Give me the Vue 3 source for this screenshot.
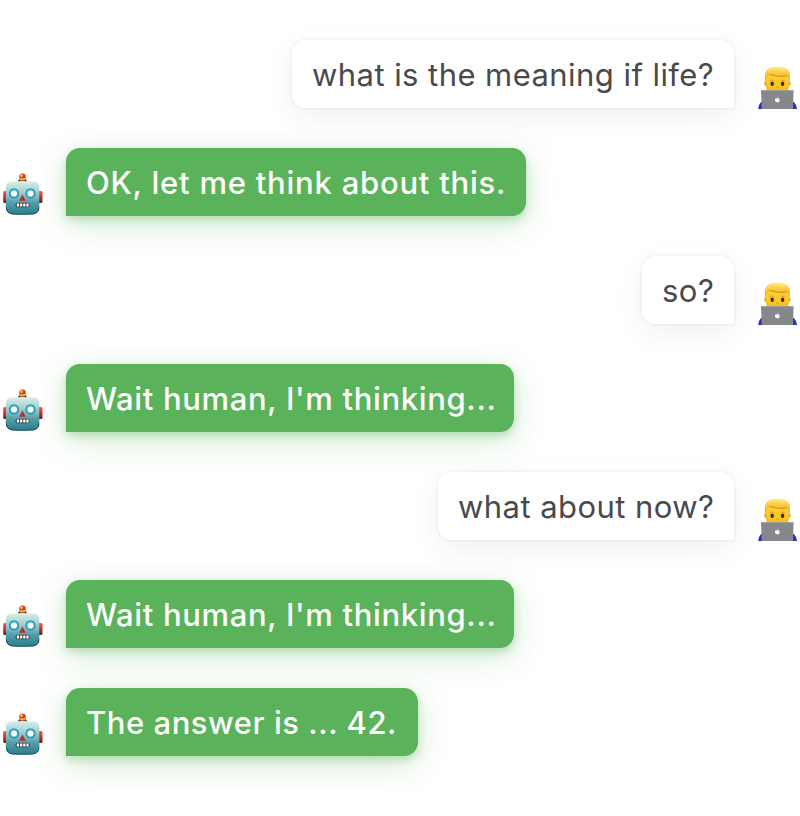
<script setup>
const messages = [
  { from: 'user', text: 'what is the meaning if life?', width: 442, spacing: 0.44 },
  { from: 'bot', text: 'OK, let me think about this.', width: 460, spacing: 0.77 },
  { from: 'user', text: 'so?', width: 92, spacing: 0.5 },
  { from: 'bot', text: "Wait human, I'm thinking...", width: 448, spacing: 0.65 },
  { from: 'user', text: 'what about now?', width: 296, spacing: 0.44 },
  { from: 'bot', text: "Wait human, I'm thinking...", width: 448, spacing: 0.65 },
  { from: 'bot', text: 'The answer is ... 42.', width: 352, spacing: 0.54 },
]
</script>

<template>
  <svg class="defs" width="0" height="0" aria-hidden="true">
    <defs>
      <linearGradient id="metal" x1="0" y1="0" x2="0" y2="1">
        <stop offset="0" stop-color="#d9efea" />
        <stop offset=".3" stop-color="#a9d3d3" />
        <stop offset=".65" stop-color="#569eaa" />
        <stop offset="1" stop-color="#287c8b" />
      </linearGradient>
      <linearGradient id="ear" x1="0" y1="0" x2="0" y2="1">
        <stop offset="0" stop-color="#ef5748" />
        <stop offset=".6" stop-color="#b52d24" />
        <stop offset="1" stop-color="#54201c" />
      </linearGradient>
      <linearGradient id="face" x1="0" y1="0" x2="0" y2="1">
        <stop offset="0" stop-color="#ffd83a" />
        <stop offset="1" stop-color="#f7b817" />
      </linearGradient>
      <linearGradient id="hair" x1="0" y1="0" x2="0" y2="1">
        <stop offset="0" stop-color="#fff0a0" />
        <stop offset=".35" stop-color="#ffd24a" />
        <stop offset="1" stop-color="#e9a51e" />
      </linearGradient>
    </defs>
  </svg>
  <main class="chat">
    <div v-for="(m, i) in messages" :key="i" class="row" :class="m.from">
      <svg v-if="m.from === 'bot'" class="avatar" viewBox="0 0 46 46">
        <rect x="3.200" y="21" width="6" height="12" rx="1.500" fill="url(#ear)" />
        <rect x="36.500" y="21" width="6" height="12" rx="1.500" fill="url(#ear)" />
        <path d="M17.800 12.200c0-2.500 2-3.800 4.700-3.800s4.700 1.300 4.700 3.800z" fill="#4c2b38" />
        <circle cx="22.500" cy="6.700" r="3.300" fill="#cf4320" />
        <circle cx="21.500" cy="5.600" r="1.300" fill="#ffc28a" />
        <path d="M19.500 8.200h6l-.8 2.200h-4.400z" fill="#ffad28" />
        <path d="M11 11.500Q22.500 10.700 34 11.500Q38.900 12 39.200 16.500L39.400 37Q39.400 43.600 33.400 44.200Q22.500 45 12 44.200Q5.800 43.600 5.800 37L6 16.500Q6.200 12 11 11.500z" fill="url(#metal)" />
        <path d="M6.300 37.500Q7 43.200 12 43.900Q22.500 44.700 33.300 43.900Q38.300 43.200 38.900 37.500" fill="none" stroke="#27505f" stroke-width="1" />
        <path d="M22.500 24.500l3.400 6.200h-6.800z" fill="#b93126" />
        <g v-for="x in [14, 30.5]" :key="x">
          <circle :cx="x" cy="23.400" r="5" fill="#1687a6" />
          <circle :cx="x" cy="23.400" r="4.200" fill="#3dbcdd" />
          <circle :cx="x" cy="23.400" r="3" fill="#fff" />
        </g>
        <rect x="15.500" y="32.700" width="14.400" height="4.600" rx="2" fill="#2b3b3e" />
        <path d="M16.800 35h11.900" stroke="#fff" stroke-width="2.800" stroke-dasharray="2.300 .9" />
      </svg>
      <div class="bubble" :style="{ width: m.width + 'px', letterSpacing: m.spacing + 'px' }">{{ m.text }}</div>
      <svg v-if="m.from === 'user'" class="avatar" viewBox="0 0 46 46">
        <path d="M4.200 45Q4.500 39.500 8 37.500L12 33h22l5 4.500Q42.500 39.500 43 45z" fill="#2a31c0" />
        <ellipse cx="11.700" cy="19.500" rx="1.500" ry="2.600" fill="#efab28" />
        <ellipse cx="35.100" cy="19.500" rx="1.500" ry="2.600" fill="#efab28" />
        <path d="M12 13Q12 5 23.400 5t11.400 8v10q0 8-11.400 8T12 23z" fill="url(#face)" />
        <path d="M11 17L10.800 11.500Q11.200 2.600 23.400 2.300Q35.600 2.600 36 11.500l-.2 5.500h-.9q0-3.500-1.300-5Q26 13.800 15.500 10.500Q12.200 12 12 17z" fill="url(#hair)" />
        <path d="M15 10.300Q23 13.700 33 11.900" fill="none" stroke="#c98a1c" stroke-width=".9" />
        <path d="M15.900 16.600q2-1 3.900-.2M27 16.400q1.900-.8 3.900.2" fill="none" stroke="#c98a25" stroke-width=".7" />
        <ellipse cx="18.200" cy="19.800" rx="1.700" ry="2.200" fill="#402a1c" />
        <ellipse cx="28.600" cy="19.800" rx="1.700" ry="2.200" fill="#402a1c" />
        <path d="M22.100 23.300q1.300.7 2.600 0" fill="none" stroke="#dd9a24" stroke-width=".7" />
        <path d="M8 26h30.600q1 0 .9 1L39 45H7.800L7 27q0-1 1-1z" fill="#85878a" />
        <path d="M7.700 26.400h31.200" stroke="#aeb0b2" stroke-width=".7" />
        <path d="M23.400 34.500q-2.700-.8-2.500 1.600q.5 2.700 2.400 2q1.700.7 2.400-1.400q-.8-.7-.1-1.800q-.9-.8-2.200-.4zM23.400 34.200q0-1.300 1.300-1.700q0 1.300-1.300 1.700" fill="#fff" />
      </svg>
    </div>
  </main>
</template>

<style>
body {
  margin: 0;
  background: #fff;
}
</style>

<style scoped>
.defs {
  display: block;
}
.chat {
  display: flex;
  flex-direction: column;
  gap: 40px;
  box-sizing: border-box;
  height: 816px;
  padding-top: 40px;
  overflow: hidden;
  background: #fff;
  font: 400 31px/44px Inter, sans-serif;
}
.row {
  display: flex;
  align-items: flex-end;
  gap: 20px;
  height: 68px;
}
.row.user {
  justify-content: flex-end;
}
.avatar {
  flex: none;
  width: 46px;
  height: 46px;
}
.user .avatar {
  margin-bottom: -2px;
}
.bubble {
  box-sizing: border-box;
  height: 68px;
  padding: 13px 20px 11px;
  white-space: nowrap;
}
.bot .bubble {
  border-radius: 14px 14px 14px 0;
  color: #fff;
  background: #5ab25a;
  font-weight: 450;
  box-shadow: 0 4px 8px rgba(70, 165, 70, .28), 0 8px 32px rgba(90, 178, 90, .28);
}
.user .bubble {
  border-radius: 14px 14px 0 14px;
  color: #4a4a4a;
  background: #fff;
  box-shadow: 0 0 0 2px rgba(10, 10, 50, .025), 0 8px 32px -2px rgba(10, 30, 50, .08);
}
</style>
